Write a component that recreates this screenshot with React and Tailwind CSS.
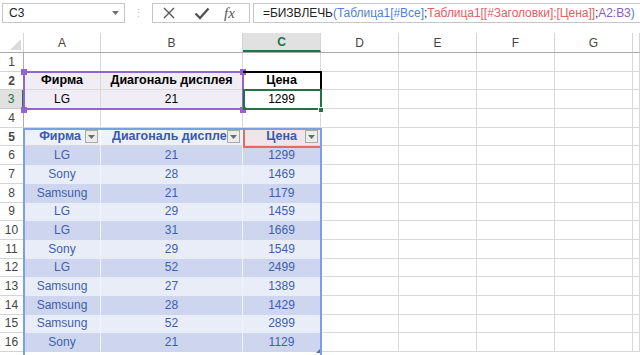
import React from 'react';

const COLS = [
  { key: 'A', w: 77 },
  { key: 'B', w: 142 },
  { key: 'C', w: 78 },
  { key: 'D', w: 78 },
  { key: 'E', w: 78 },
  { key: 'F', w: 78 },
  { key: 'G', w: 78 },
  { key: 'H', w: 7 },
];

const widthClass = {
  A: 'w-[77px]',
  B: 'w-[142px]',
  C: 'w-[78px]',
  D: 'w-[78px]',
  E: 'w-[78px]',
  F: 'w-[78px]',
  G: 'w-[78px]',
  H: 'w-[7px]',
};

const data = [
  ['LG', '21', '1299'],
  ['Sony', '28', '1469'],
  ['Samsung', '21', '1179'],
  ['LG', '29', '1459'],
  ['LG', '31', '1669'],
  ['Sony', '29', '1549'],
  ['LG', '52', '2499'],
  ['Samsung', '27', '1389'],
  ['Samsung', '28', '1429'],
  ['Samsung', '52', '2899'],
  ['Sony', '21', '1129'],
];

const FilterBtn = () => (
  <span className="w-[13px] h-[13px] border border-[#a9a9a9] bg-[#ececec] flex items-center justify-center shrink-0">
    <svg width="7" height="4" viewBox="0 0 7 4">
      <path d="M0 0 L7 0 L3.5 4 Z" fill="#6b6b6b" />
    </svg>
  </span>
);

const RowHead = ({ n, active }) => (
  <div
    className={`w-[24px] shrink-0 h-full flex items-center justify-center border-r border-b ${
      active
        ? 'bg-[#e1e1e1] text-[#217346] border-r-[#217346] border-r-2 border-b-[#c8c8c8]'
        : 'bg-white text-[#444] border-r-[#ababab] border-b-[#d4d4d4]'
    }`}
  >
    {n}
  </div>
);

const Cell = ({ col, children, className = '' }) => (
  <div
    className={`${widthClass[col]} shrink-0 h-full border-r border-b border-[#d9d9d9] flex items-center overflow-hidden whitespace-nowrap ${className}`}
  >
    {children}
  </div>
);

const EmptyRest = ({ from }) =>
  COLS.slice(from).map((c) => <Cell key={c.key} col={c.key} />);

export default function App() {
  return (
    <div
      className="w-[640px] h-[355px] bg-white overflow-hidden relative text-[12px] text-[#222]"
      style={{ fontFamily: '"Liberation Sans", Arial, sans-serif' }}
    >
      {/* formula bar */}
      <div className="flex h-[20px] mt-[3px] items-stretch">
        <div className="ml-[2px] w-[123px] border border-[#c6c6c6] flex items-center pl-[6px] pr-[5px] justify-between">
          <span>C3</span>
          <svg width="7" height="4" viewBox="0 0 7 4">
            <path d="M0 0 L7 0 L3.5 4 Z" fill="#707070" />
          </svg>
        </div>
        <div className="w-[27px] flex items-center justify-center text-[#c4c4c4] text-[11px]">⋮</div>
        <div className="w-[98px] border border-[#c6c6c6] flex items-center">
          <svg className="ml-[9px]" width="14" height="14" viewBox="0 0 14 14">
            <path d="M2 2 L12 12 M12 2 L2 12" stroke="#555" strokeWidth="1.4" />
          </svg>
          <svg className="ml-[18px]" width="16" height="14" viewBox="0 0 16 14">
            <path d="M1.5 7.5 L6 12 L14.5 2.5" stroke="#555" strokeWidth="2.4" fill="none" />
          </svg>
          <span
            className="ml-[14px] text-[15px] italic text-[#555]"
            style={{ fontFamily: '"Liberation Serif", serif' }}
          >
            fx
          </span>
        </div>
        <div className="ml-[3px] flex-1 border border-[#c6c6c6] border-r-0 flex items-center pl-[9px] whitespace-nowrap overflow-hidden tracking-[-0.05px]">
          <span>=БИЗВЛЕЧЬ</span>
          <span className="text-[#4f81d0]">(Таблица1[#Все]</span>
          <span>;</span>
          <span className="text-[#e0605f]">Таблица1[[#Заголовки];[Цена]]</span>
          <span>;</span>
          <span className="text-[#8a5ec0]">A2:B3</span>
          <span className="text-[#4f81d0]">)</span>
        </div>
      </div>

      {/* sheet */}
      <div className="mt-[10px] text-[12px]">
        {/* column headers */}
        <div className="flex h-[20px] border-b border-[#ababab]">
          <div className="w-[24px] shrink-0 h-full border-r border-[#d4d4d4] relative">
            <svg className="absolute right-[2px] bottom-[2px]" width="11" height="11" viewBox="0 0 11 11">
              <path d="M11 0 L11 11 L0 11 Z" fill="#dadada" />
            </svg>
          </div>
          {COLS.map((c) => (
            <div
              key={c.key}
              className={`${widthClass[c.key]} shrink-0 h-full flex items-center justify-center border-r border-[#d4d4d4] ${
                c.key === 'C'
                  ? 'bg-[#e1e1e1] text-[#217346] font-bold border-b-2 border-b-[#217346]'
                  : 'text-[#444]'
              }`}
            >
              {c.key === 'H' ? '' : c.key}
            </div>
          ))}
        </div>

        <div className="relative">
          {/* row 1 */}
          <div className="flex h-[18.7px]">
            <RowHead n={1} />
            <EmptyRest from={0} />
          </div>
          {/* row 2 */}
          <div className="flex h-[18.7px] font-bold text-black">
            <RowHead n={2} />
            <Cell col="A" className="bg-[#f1edf6] justify-center text-[12.5px]">Фирма</Cell>
            <Cell col="B" className="bg-[#f1edf6] justify-center text-[12.5px]">Диагональ дисплея</Cell>
            <Cell col="C" className="justify-center text-[12.5px]">Цена</Cell>
            <EmptyRest from={3} />
          </div>
          {/* row 3 */}
          <div className="flex h-[18.7px] text-black">
            <RowHead n={3} active />
            <Cell col="A" className="bg-[#f1edf6] justify-center">LG</Cell>
            <Cell col="B" className="bg-[#f1edf6] justify-center">21</Cell>
            <Cell col="C" className="justify-center">1299</Cell>
            <EmptyRest from={3} />
          </div>
          {/* row 4 */}
          <div className="flex h-[18.7px]">
            <RowHead n={4} />
            <EmptyRest from={0} />
          </div>
          {/* row 5: table header */}
          <div className="flex h-[18.7px] font-bold text-[#3a5aa8]">
            <RowHead n={5} />
            <Cell col="A" className="bg-[#edf1f9] justify-end pr-[2px] gap-[4px] border-r-white text-[12.5px]">
              <span>Фирма</span>
              <FilterBtn />
            </Cell>
            <Cell col="B" className="bg-[#edf1f9] pl-[11px] pr-[2px] border-r-white text-[12.5px]">
              <span className="flex-1 overflow-hidden">Диагональ дисплея</span>
              <FilterBtn />
            </Cell>
            <Cell col="C" className="bg-[#f1e4ea] justify-end pr-[2px] gap-[8px] text-[12.5px]">
              <span>Цена</span>
              <FilterBtn />
            </Cell>
            <EmptyRest from={3} />
          </div>
          {/* data rows */}
          {data.map((r, i) => {
            const band = i % 2 === 0 ? 'bg-[#cdd6ee]' : 'bg-[#e9edf8]';
            return (
              <div key={i} className="flex h-[18.7px] text-[#3f5fae]">
                <RowHead n={i + 6} />
                <Cell col="A" className={`${band} justify-center border-b-transparent border-r-[#f2f4fb]`}>{r[0]}</Cell>
                <Cell col="B" className={`${band} justify-center border-b-transparent border-r-[#f2f4fb]`}>{r[1]}</Cell>
                <Cell col="C" className={`${band} justify-center border-b-transparent`}>{r[2]}</Cell>
                <EmptyRest from={3} />
              </div>
            );
          })}

          {/* overlays: reference ranges and selection */}
          <div className="absolute left-[23px] top-[17.7px] w-[221px] h-[39.4px] border-2 border-[#9266cc] pointer-events-none" />
          {[
            'left-[21px] top-[15.7px]',
            'left-[240px] top-[15.7px]',
            'left-[21px] top-[53.6px]',
            'left-[240px] top-[53.6px]',
          ].map((p) => (
            <div key={p} className={`absolute ${p} w-[6px] h-[6px] bg-[#9266cc]`} />
          ))}
          <div className="absolute left-[243px] top-[17.7px] w-[79px] h-[20px] border-2 border-black border-l-0" />
          <div className="absolute left-[243px] top-[36.4px] w-[79px] h-[20.7px] border-2 border-[#217346]" />
          <div className="absolute left-[318px] top-[53.6px] w-[6px] h-[6px] bg-[#217346] border border-white" />
          <div className="absolute left-[243px] top-[74.8px] w-[79px] h-[20.7px] border-2 border-[#e46a6a]" />
          <div className="absolute left-[23px] top-[74.8px] w-[299px] h-[281px] border-2 border-[#7b9fe6] pointer-events-none" />
          <svg className="absolute left-[316px] top-[296px]" width="4" height="4" viewBox="0 0 4 4">
            <path d="M4 0 L4 4 L0 4 Z" fill="#4a6fc0" />
          </svg>
        </div>
      </div>
    </div>
  );
}
